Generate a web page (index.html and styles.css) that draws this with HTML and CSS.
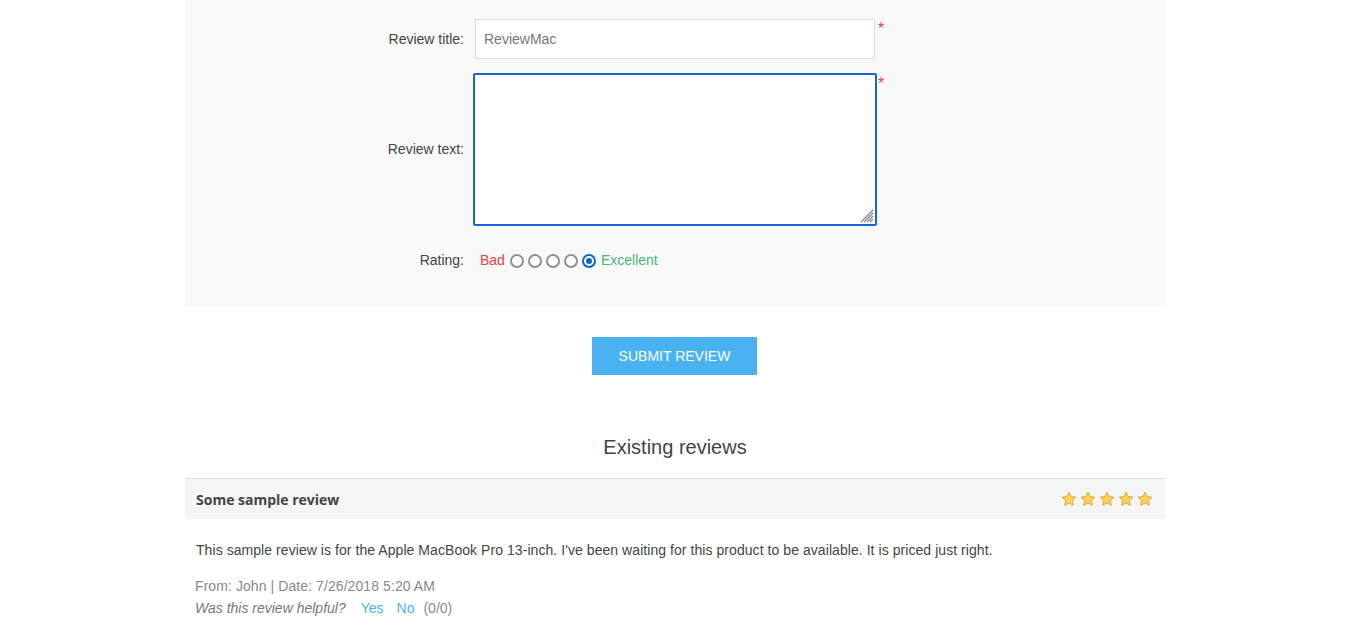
FILE: index.html
```html
<!DOCTYPE html>
<html>
<head>
<meta charset="utf-8">
<link rel="stylesheet" href="styles.css">
</head>
<body>
<div class="page">
  <div class="form">
    <div class="row row-title">
      <label class="label">Review title:</label>
      <div class="field">
        <input class="input" type="text" value="ReviewMac">
        <span class="req">*</span>
      </div>
    </div>
    <div class="row row-text">
      <label class="label">Review text:</label>
      <div class="field">
        <div class="textarea">
          <svg class="grip" width="14" height="14" viewBox="0 0 14 14"><path d="M13 1L1 13M13 4L4 13M13 7L7 13M13 10L10 13" stroke="#808080" stroke-width="1.1" fill="none"/></svg>
        </div>
        <span class="req">*</span>
      </div>
    </div>
    <div class="row row-rating">
      <label class="label">Rating:</label>
      <div class="field rating">
        <span class="bad">Bad</span>
        <span class="radio"></span>
        <span class="radio"></span>
        <span class="radio"></span>
        <span class="radio"></span>
        <span class="radio checked"></span>
        <span class="good">Excellent</span>
      </div>
    </div>
  </div>
  <div class="buttons">
    <button class="submit">SUBMIT REVIEW</button>
  </div>
  <h2 class="heading">Existing reviews</h2>
  <div class="review">
    <div class="review-head">
      <strong class="review-title">Some sample review</strong>
      <div class="stars">
        <svg class="star" viewBox="0 0 16 16"><path d="M8 1.2l2.1 4.4 4.8.6-3.5 3.3.9 4.8L8 12l-4.3 2.3.9-4.8L1.1 6.2l4.8-.6z"/></svg>
        <svg class="star" viewBox="0 0 16 16"><path d="M8 1.2l2.1 4.4 4.8.6-3.5 3.3.9 4.8L8 12l-4.3 2.3.9-4.8L1.1 6.2l4.8-.6z"/></svg>
        <svg class="star" viewBox="0 0 16 16"><path d="M8 1.2l2.1 4.4 4.8.6-3.5 3.3.9 4.8L8 12l-4.3 2.3.9-4.8L1.1 6.2l4.8-.6z"/></svg>
        <svg class="star" viewBox="0 0 16 16"><path d="M8 1.2l2.1 4.4 4.8.6-3.5 3.3.9 4.8L8 12l-4.3 2.3.9-4.8L1.1 6.2l4.8-.6z"/></svg>
        <svg class="star" viewBox="0 0 16 16"><path d="M8 1.2l2.1 4.4 4.8.6-3.5 3.3.9 4.8L8 12l-4.3 2.3.9-4.8L1.1 6.2l4.8-.6z"/></svg>
      </div>
    </div>
    <div class="review-body">This sample review is for the Apple MacBook Pro 13-inch. I've been waiting for this product to be available. It is priced just right.</div>
    <div class="review-info">From: John | Date: 7/26/2018 5:20 AM</div>
    <div class="helpful"><em>Was this review helpful?</em><a class="vote vote-yes">Yes</a><a class="vote vote-no">No</a><span class="count">(0/0)</span></div>
  </div>
</div>
</body>
</html>
```

FILE: styles.css
```css
* { box-sizing: border-box; }
html, body { margin: 0; padding: 0; background: #fff; }
body { font-family: "Liberation Sans", Arial, sans-serif; font-size: 14px; color: #444; }
.page { width: 980px; margin: 0 0 0 185px; }
.form { background: #f9f9f9; padding: 19px 0 37px; }
.row { display: grid; grid-template-columns: 279px 1fr; column-gap: 11px; align-items: center; }
.label { text-align: right; color: #444; font-size: 14px; }
.field { position: relative; display: flex; align-items: center; }
.row-title { margin-bottom: 14px; }
.input { width: 400px; height: 40px; border: 1px solid #ddd; background: #fff; padding: 0 8px; font: 14px "Liberation Sans", Arial, sans-serif; color: #777; outline: none; }
.req { position: absolute; color: #e4434b; font-size: 16px; line-height: 16px; }
.row-title .req { left: 403px; top: 2px; }
.row-text .req { left: 403px; top: 3px; }
.textarea { position: relative; width: 404px; height: 153px; margin-left: -2px; border: 2px solid #1565d8; border-radius: 2px; background: #fff; }
.grip { position: absolute; right: 1px; bottom: 1px; }
.row-text .label { position: relative; top: -1px; }
.row-rating { margin-top: 24px; height: 20px; }
.rating { margin-left: 5px; line-height: 20px; }
.bad { color: #e4434b; margin-right: 5px; }
.good { color: #4ab27c; margin-left: 5px; }
.radio { flex: none; width: 14px; height: 14px; border: 2px solid #8f8f9d; border-radius: 50%; margin-right: 4px; background: #fff; position: relative; top: 1px; }
.radio.checked { margin-right: 0; border-color: #0b63d6; }
.radio.checked::after { content: ""; position: absolute; left: 2px; top: 2px; width: 6px; height: 6px; border-radius: 50%; background: #0b63d6; }
.buttons { display: flex; justify-content: center; padding-top: 30px; padding-right: 1px; }
.submit { width: 165px; height: 38px; border: none; background: #4ab2f1; color: #fff; font: 14px "Liberation Sans", Arial, sans-serif; padding: 0; }
.heading { margin: 60px 0 19px; text-align: center; font-weight: normal; font-size: 20px; line-height: 24px; color: #444; }
.review-head { display: flex; justify-content: space-between; align-items: center; height: 41px; border-top: 1px solid #ddd; background: #f5f5f5; padding: 0 12px 0 11px; }
.review-title { font-family: "Open Sans", sans-serif; font-weight: 700; font-size: 14px; color: #444; }
.stars { display: flex; gap: 3px; }
.star { width: 16px; height: 16px; fill: #f7d35a; stroke: #e8a33c; stroke-width: 1; stroke-linejoin: round; }
.review-body { padding: 22px 11px 0; line-height: 18px; color: #444; letter-spacing: 0.06px; }
.review-info { padding: 18px 10px 0; color: #888; line-height: 18px; letter-spacing: 0.08px; }
.helpful { padding: 4px 10px 0; color: #888; line-height: 18px; }
.helpful em { font-style: italic; color: #777; margin-right: 15px; }
.vote { color: #4ab2f1; }
.vote-yes { margin-right: 13px; }
.vote-no { margin-right: 9px; }
```
